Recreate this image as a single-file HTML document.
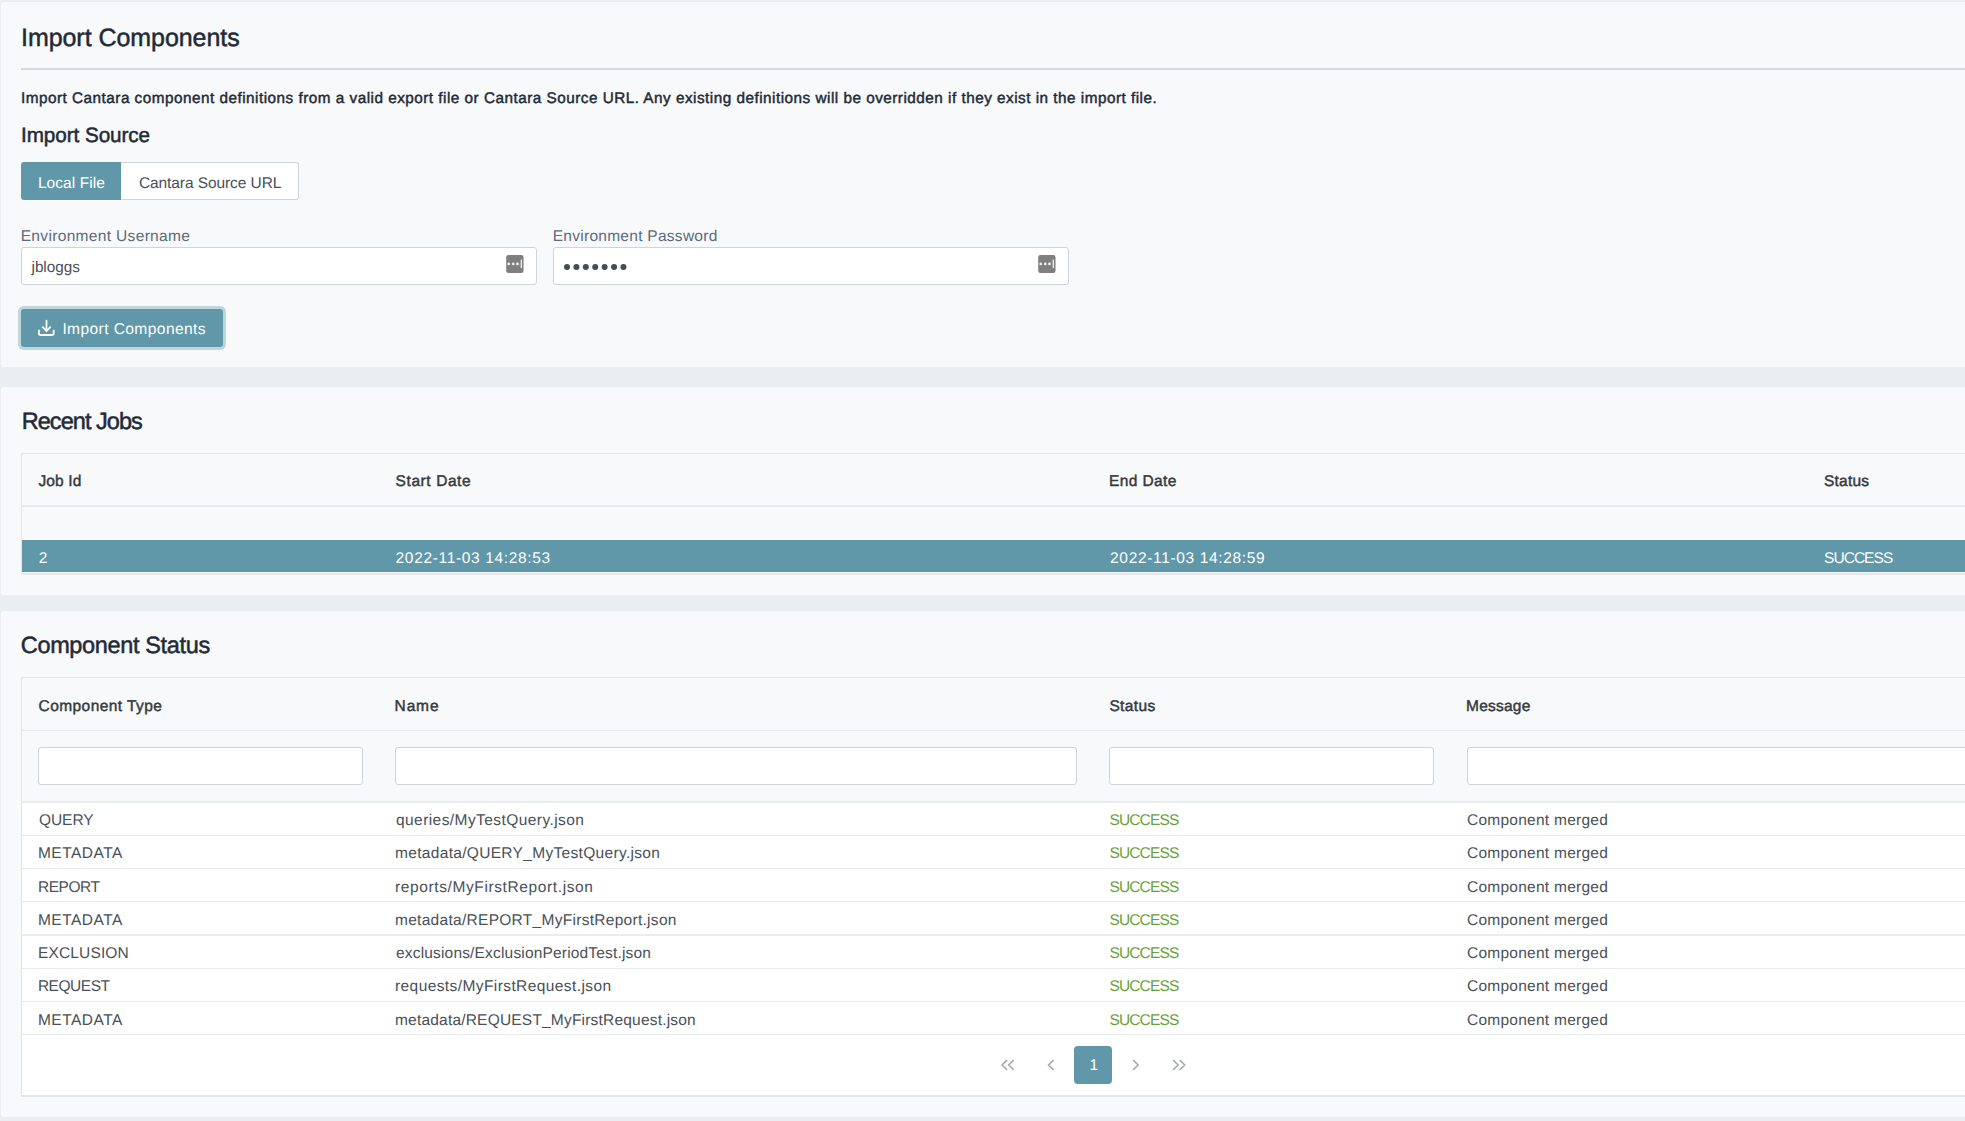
<!DOCTYPE html>
<html><head><meta charset="utf-8">
<style>
*{box-sizing:border-box;margin:0;padding:0}
html,body{width:1965px;height:1121px;overflow:hidden;text-rendering:geometricPrecision;background:#e9eef1;font-family:"Liberation Sans",sans-serif;color:#495057}
.a{position:absolute}
.panel{position:absolute;left:1px;width:2200px;background:#f8f9fa;border-radius:2.5px}
.t{position:absolute;white-space:nowrap;line-height:1}
.inp{position:absolute;background:#fff;border:1px solid #ced4da;border-radius:3px}
.hl{position:absolute;height:1px;left:22px;width:2200px}
</style></head><body>

<!-- Panel 1 -->
<div class="panel" style="top:2px;height:365px"></div>
<div class="a" style="left:21px;top:68px;width:2000px;height:2px;background:#d5d8db"></div>

<div class="a" style="left:21px;top:162px;width:100px;height:38px;background:#6098a9;border-radius:3px 0 0 3px"></div>
<div class="a" style="left:121px;top:162px;width:178px;height:38px;background:#fff;border:1px solid #ced4da;border-left:0;border-radius:0 3px 3px 0"></div>

<div class="inp" style="left:21px;top:247px;width:516px;height:38px"></div>
<div class="inp" style="left:553px;top:247px;width:516px;height:38px"></div>
<svg class="a" style="left:502px;top:251px" width="26" height="26" viewBox="0 0 26 26"><rect x="4.2" y="4.1" width="17.3" height="17.8" rx="2.2" fill="#7f7f7f"/><g fill="#f2f2f2"><circle cx="6.7" cy="12.9" r="1.35"/><circle cx="11.25" cy="12.9" r="1.35"/><circle cx="15.5" cy="12.9" r="1.35"/><rect x="18.65" y="8.4" width="1.3" height="8.8" rx="0.6"/></g></svg>
<svg class="a" style="left:1034px;top:251px" width="26" height="26" viewBox="0 0 26 26"><rect x="4.2" y="4.1" width="17.3" height="17.8" rx="2.2" fill="#7f7f7f"/><g fill="#f2f2f2"><circle cx="6.7" cy="12.9" r="1.35"/><circle cx="11.25" cy="12.9" r="1.35"/><circle cx="15.5" cy="12.9" r="1.35"/><rect x="18.65" y="8.4" width="1.3" height="8.8" rx="0.6"/></g></svg>
<svg class="a" style="left:0;top:0" width="1965" height="300"><g fill="#444c56"><circle cx="567.00" cy="267" r="3"/><circle cx="576.41" cy="267" r="3"/><circle cx="585.82" cy="267" r="3"/><circle cx="595.23" cy="267" r="3"/><circle cx="604.64" cy="267" r="3"/><circle cx="614.05" cy="267" r="3"/><circle cx="623.46" cy="267" r="3"/></g></svg>

<div class="a" style="left:18px;top:306px;width:208px;height:44px;background:#bfd6dd;border-radius:6px"></div>
<div class="a" style="left:21px;top:309px;width:202px;height:38px;background:#6098a9;border-radius:3px"></div>
<svg class="a" style="left:34px;top:316px" width="26" height="24" viewBox="34 316 26 24">
 <g fill="none" stroke="#fff" stroke-width="1.8" stroke-linecap="butt" stroke-linejoin="miter">
 <path d="M46.5 319.9 V330.6"/>
 <path d="M42.3 326.7 L46.5 330.9 L50.7 326.7"/>
 <path d="M38.9 329.8 V333.2 Q38.9 335 40.7 335 H51.9 Q53.7 335 53.7 333.2 V329.8"/>
 </g>
</svg>

<!-- Panel 2 -->
<div class="panel" style="top:387px;height:208px"></div>
<div class="a" style="left:21px;top:453px;width:2200px;height:1px;background:#e2e4e6"></div>
<div class="a" style="left:21px;top:453px;width:1px;height:121px;background:#e2e4e6"></div>
<div class="a" style="left:22px;top:505px;width:2200px;height:2px;background:#e9ecef"></div>
<div class="a" style="left:22px;top:540px;width:2200px;height:32px;background:#6098a9"></div>
<div class="a" style="left:22px;top:572px;width:2200px;height:1px;background:#f2f4f6"></div>
<div class="a" style="left:21px;top:573px;width:2200px;height:2px;background:#e6e8ea"></div>

<!-- Panel 3 -->
<div class="panel" style="top:611px;height:506px"></div>
<div class="a" style="left:21px;top:677px;width:2200px;height:1px;background:#e2e4e6"></div>
<div class="a" style="left:21px;top:677px;width:1px;height:420px;background:#e2e4e6"></div>
<div class="a" style="left:22px;top:730px;width:2200px;height:1px;background:#e9ecef"></div>
<div class="inp" style="left:38px;top:747px;width:325px;height:38px"></div>
<div class="inp" style="left:395px;top:747px;width:682px;height:38px"></div>
<div class="inp" style="left:1109px;top:747px;width:325px;height:38px"></div>
<div class="inp" style="left:1467px;top:747px;width:682px;height:38px"></div>
<div class="a" style="left:22px;top:801px;width:2200px;height:2px;background:#e9ecef"></div>
<div class="a" style="left:22px;top:803px;width:2200px;height:292px;background:#fff"></div>
<div class="hl" style="top:835px;background:#e9ecef"></div>
<div class="hl" style="top:868px;background:#e9ecef"></div>
<div class="hl" style="top:901px;background:#e9ecef"></div>
<div class="hl" style="top:934px;height:2px;background:#e9ecef"></div>
<div class="hl" style="top:968px;background:#e9ecef"></div>
<div class="hl" style="top:1001px;background:#e9ecef"></div>
<div class="hl" style="top:1034px;background:#e9ecef"></div>
<div class="a" style="left:21px;top:1095px;width:2200px;height:2px;background:#e3e5e7"></div>

<div class="a" style="left:1074px;top:1046px;width:38px;height:38px;background:#6098a9;border-radius:4px"></div>
<svg class="a" style="left:990px;top:1050px" width="210" height="30" viewBox="990 1050 210 30">
 <g fill="none" stroke="#a6acb1" stroke-width="1.7" stroke-linecap="round" stroke-linejoin="round">
  <path d="M1006.6 1060.6 L1002 1065 L1006.6 1069.4 M1013.2 1060.6 L1008.6 1065 L1013.2 1069.4"/>
  <path d="M1053 1060.6 L1048.4 1065 L1053 1069.4"/>
  <path d="M1133.6 1060.6 L1138.2 1065 L1133.6 1069.4"/>
  <path d="M1173.6 1060.6 L1178.2 1065 L1173.6 1069.4 M1180.2 1060.6 L1184.8 1065 L1180.2 1069.4"/>
 </g>
</svg>
<div class="t" style="left:1089.5px;top:1058px;font-size:15.5px;color:#fff">1</div>

<div class="t" style="left:21.00px;top:26.00px;font-size:25px;color:#1f2a37;letter-spacing:-0.053px;-webkit-text-stroke:0.5px #1f2a37">Import Components</div>
<div class="t" style="left:21.00px;top:91.00px;font-size:15.3px;color:#1f2a37;letter-spacing:0.490px;-webkit-text-stroke:0.45px #1f2a37">Import Cantara component definitions from a valid export file or Cantara Source URL. Any existing definitions will be overridden if they exist in the import file.</div>
<div class="t" style="left:21.00px;top:126.00px;font-size:20.7px;color:#1f2a37;letter-spacing:-0.068px;-webkit-text-stroke:0.5px #1f2a37">Import Source</div>
<div class="t" style="left:37.90px;top:176.00px;font-size:15.5px;color:#ffffff;letter-spacing:0.076px">Local File</div>
<div class="t" style="left:138.90px;top:176.00px;font-size:15.5px;color:#495057;letter-spacing:-0.080px">Cantara Source URL</div>
<div class="t" style="left:20.70px;top:229.00px;font-size:15.5px;color:#5b6b7c;letter-spacing:0.337px">Environment Username</div>
<div class="t" style="left:552.70px;top:229.00px;font-size:15.5px;color:#5b6b7c;letter-spacing:0.276px">Environment Password</div>
<div class="t" style="left:31.50px;top:260.00px;font-size:15.3px;color:#495057;letter-spacing:-0.021px">jbloggs</div>
<div class="t" style="left:62.40px;top:322.00px;font-size:15.6px;color:#ffffff;letter-spacing:0.391px">Import Components</div>
<div class="t" style="left:21.70px;top:410.00px;font-size:23.5px;color:#1f2a37;letter-spacing:-0.948px;-webkit-text-stroke:0.5px #1f2a37">Recent Jobs</div>
<div class="t" style="left:38.50px;top:474.00px;font-size:15.5px;color:#343a40;letter-spacing:0.119px;-webkit-text-stroke:0.45px #343a40">Job Id</div>
<div class="t" style="left:395.60px;top:474.00px;font-size:15.5px;color:#343a40;letter-spacing:0.582px;-webkit-text-stroke:0.45px #343a40">Start Date</div>
<div class="t" style="left:1109.10px;top:474.00px;font-size:15.5px;color:#343a40;letter-spacing:0.371px;-webkit-text-stroke:0.45px #343a40">End Date</div>
<div class="t" style="left:1824.00px;top:474.00px;font-size:15.5px;color:#343a40;letter-spacing:0.222px;-webkit-text-stroke:0.45px #343a40">Status</div>
<div class="t" style="left:38.80px;top:551.00px;font-size:15.5px;color:#ffffff">2</div>
<div class="t" style="left:395.60px;top:551.00px;font-size:15.5px;color:#ffffff;letter-spacing:0.658px">2022-11-03 14:28:53</div>
<div class="t" style="left:1110.10px;top:551.00px;font-size:15.5px;color:#ffffff;letter-spacing:0.658px">2022-11-03 14:28:59</div>
<div class="t" style="left:1824.00px;top:551.00px;font-size:15.5px;color:#ffffff;letter-spacing:-0.949px">SUCCESS</div>
<div class="t" style="left:20.80px;top:634.00px;font-size:23.5px;color:#1f2a37;letter-spacing:-0.353px;-webkit-text-stroke:0.5px #1f2a37">Component Status</div>
<div class="t" style="left:38.60px;top:699.00px;font-size:15.5px;color:#343a40;letter-spacing:0.421px;-webkit-text-stroke:0.45px #343a40">Component Type</div>
<div class="t" style="left:394.60px;top:699.00px;font-size:15.5px;color:#343a40;letter-spacing:0.858px;-webkit-text-stroke:0.45px #343a40">Name</div>
<div class="t" style="left:1109.40px;top:699.00px;font-size:15.5px;color:#343a40;letter-spacing:0.382px;-webkit-text-stroke:0.45px #343a40">Status</div>
<div class="t" style="left:1466.00px;top:699.00px;font-size:15.5px;color:#343a40;letter-spacing:0.238px;-webkit-text-stroke:0.45px #343a40">Message</div>
<div class="t" style="left:38.90px;top:813.00px;font-size:15.5px;color:#495057;letter-spacing:-0.025px">QUERY</div>
<div class="t" style="left:396.00px;top:813.00px;font-size:15.5px;color:#495057;letter-spacing:0.430px">queries/MyTestQuery.json</div>
<div class="t" style="left:1109.40px;top:813.00px;font-size:15.5px;color:#689f38;letter-spacing:-0.849px">SUCCESS</div>
<div class="t" style="left:1467.00px;top:813.00px;font-size:15.5px;color:#495057;letter-spacing:0.255px">Component merged</div>
<div class="t" style="left:37.90px;top:846.00px;font-size:15.5px;color:#495057;letter-spacing:0.514px">METADATA</div>
<div class="t" style="left:395.00px;top:846.00px;font-size:15.5px;color:#495057;letter-spacing:0.321px">metadata/QUERY_MyTestQuery.json</div>
<div class="t" style="left:1109.40px;top:846.00px;font-size:15.5px;color:#689f38;letter-spacing:-0.849px">SUCCESS</div>
<div class="t" style="left:1467.00px;top:846.00px;font-size:15.5px;color:#495057;letter-spacing:0.255px">Component merged</div>
<div class="t" style="left:37.90px;top:880.00px;font-size:15.5px;color:#495057;letter-spacing:-0.448px">REPORT</div>
<div class="t" style="left:395.00px;top:880.00px;font-size:15.5px;color:#495057;letter-spacing:0.613px">reports/MyFirstReport.json</div>
<div class="t" style="left:1109.40px;top:880.00px;font-size:15.5px;color:#689f38;letter-spacing:-0.849px">SUCCESS</div>
<div class="t" style="left:1467.00px;top:880.00px;font-size:15.5px;color:#495057;letter-spacing:0.255px">Component merged</div>
<div class="t" style="left:37.90px;top:913.00px;font-size:15.5px;color:#495057;letter-spacing:0.514px">METADATA</div>
<div class="t" style="left:395.00px;top:913.00px;font-size:15.5px;color:#495057;letter-spacing:0.288px">metadata/REPORT_MyFirstReport.json</div>
<div class="t" style="left:1109.40px;top:913.00px;font-size:15.5px;color:#689f38;letter-spacing:-0.849px">SUCCESS</div>
<div class="t" style="left:1467.00px;top:913.00px;font-size:15.5px;color:#495057;letter-spacing:0.255px">Component merged</div>
<div class="t" style="left:37.90px;top:946.00px;font-size:15.5px;color:#495057;letter-spacing:0.164px">EXCLUSION</div>
<div class="t" style="left:396.00px;top:946.00px;font-size:15.5px;color:#495057;letter-spacing:0.175px">exclusions/ExclusionPeriodTest.json</div>
<div class="t" style="left:1109.40px;top:946.00px;font-size:15.5px;color:#689f38;letter-spacing:-0.849px">SUCCESS</div>
<div class="t" style="left:1467.00px;top:946.00px;font-size:15.5px;color:#495057;letter-spacing:0.255px">Component merged</div>
<div class="t" style="left:37.90px;top:979.00px;font-size:15.5px;color:#495057;letter-spacing:-0.476px">REQUEST</div>
<div class="t" style="left:395.00px;top:979.00px;font-size:15.5px;color:#495057;letter-spacing:0.411px">requests/MyFirstRequest.json</div>
<div class="t" style="left:1109.40px;top:979.00px;font-size:15.5px;color:#689f38;letter-spacing:-0.849px">SUCCESS</div>
<div class="t" style="left:1467.00px;top:979.00px;font-size:15.5px;color:#495057;letter-spacing:0.255px">Component merged</div>
<div class="t" style="left:37.90px;top:1013.00px;font-size:15.5px;color:#495057;letter-spacing:0.514px">METADATA</div>
<div class="t" style="left:395.00px;top:1013.00px;font-size:15.5px;color:#495057;letter-spacing:0.199px">metadata/REQUEST_MyFirstRequest.json</div>
<div class="t" style="left:1109.40px;top:1013.00px;font-size:15.5px;color:#689f38;letter-spacing:-0.849px">SUCCESS</div>
<div class="t" style="left:1467.00px;top:1013.00px;font-size:15.5px;color:#495057;letter-spacing:0.255px">Component merged</div>
</body></html>
